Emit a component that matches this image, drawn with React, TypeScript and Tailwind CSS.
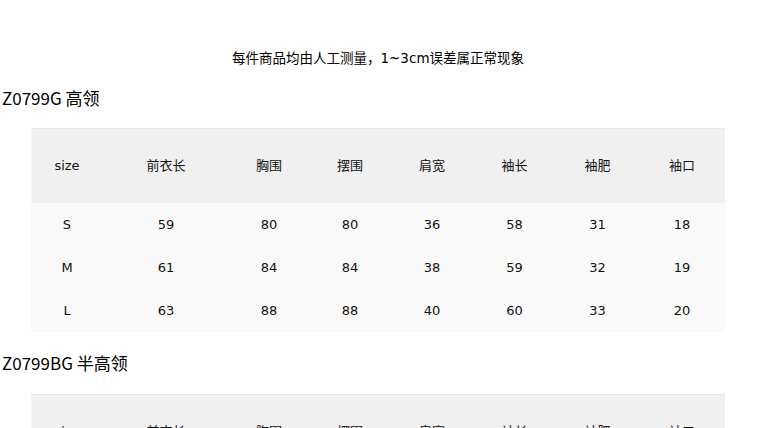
import React from 'react';

const cols = [
  { label: 'size', w: 'w-[72px]' },
  { label: '前衣长', w: 'w-[126px]' },
  { label: '胸围', w: 'w-[80px]' },
  { label: '摆围', w: 'w-[82px]' },
  { label: '肩宽', w: 'w-[82px]' },
  { label: '袖长', w: 'w-[83px]' },
  { label: '袖肥', w: 'w-[83px]' },
  { label: '袖口', w: 'w-[86px]' },
];

const rows = [
  ['S', '59', '80', '80', '36', '58', '31', '18'],
  ['M', '61', '84', '84', '38', '59', '32', '19'],
  ['L', '63', '88', '88', '40', '60', '33', '20'],
];

const SizeTable = () => (
  <div className="ml-[31px] w-[694px] text-[13px] text-[#111]">
    <div className="flex h-[75px] bg-[#f0f0f0] border-t border-[#e8e8e8]">
      {cols.map((c) => (
        <div key={c.label} className={`${c.w} flex items-center justify-center`}>
          {c.label}
        </div>
      ))}
    </div>
    <div className="bg-[#f9f9f9]">
      {rows.map((r) => (
        <div key={r[0]} className="flex h-[43px]">
          {r.map((v, i) => (
            <div key={i} className={`${cols[i].w} flex items-center justify-center`}>
              {v}
            </div>
          ))}
        </div>
      ))}
    </div>
  </div>
);

export default function App() {
  return (
    <div className="w-[760px] h-[428px] overflow-hidden bg-white font-['DejaVu_Sans','Noto_Sans_CJK_SC',sans-serif] text-black">
      <div className="pt-[48px]">
        <p className="text-center text-[13.5px] leading-[20px] pr-[4px]">
          每件商品均由人工测量，1~3cm误差属正常现象
        </p>
        <h2 className="mt-[20px] pl-[2px] text-[17px] leading-[20px] font-['Noto_Sans_CJK_SC',sans-serif]">
          Z0799G 高领
        </h2>
        <div className="mt-[20px]">
          <SizeTable />
        </div>
        <h2 className="mt-[21px] pl-[2px] text-[17px] leading-[20px] font-['Noto_Sans_CJK_SC',sans-serif]">
          Z0799BG 半高领
        </h2>
        <div className="mt-[21px]">
          <SizeTable />
        </div>
      </div>
    </div>
  );
}
